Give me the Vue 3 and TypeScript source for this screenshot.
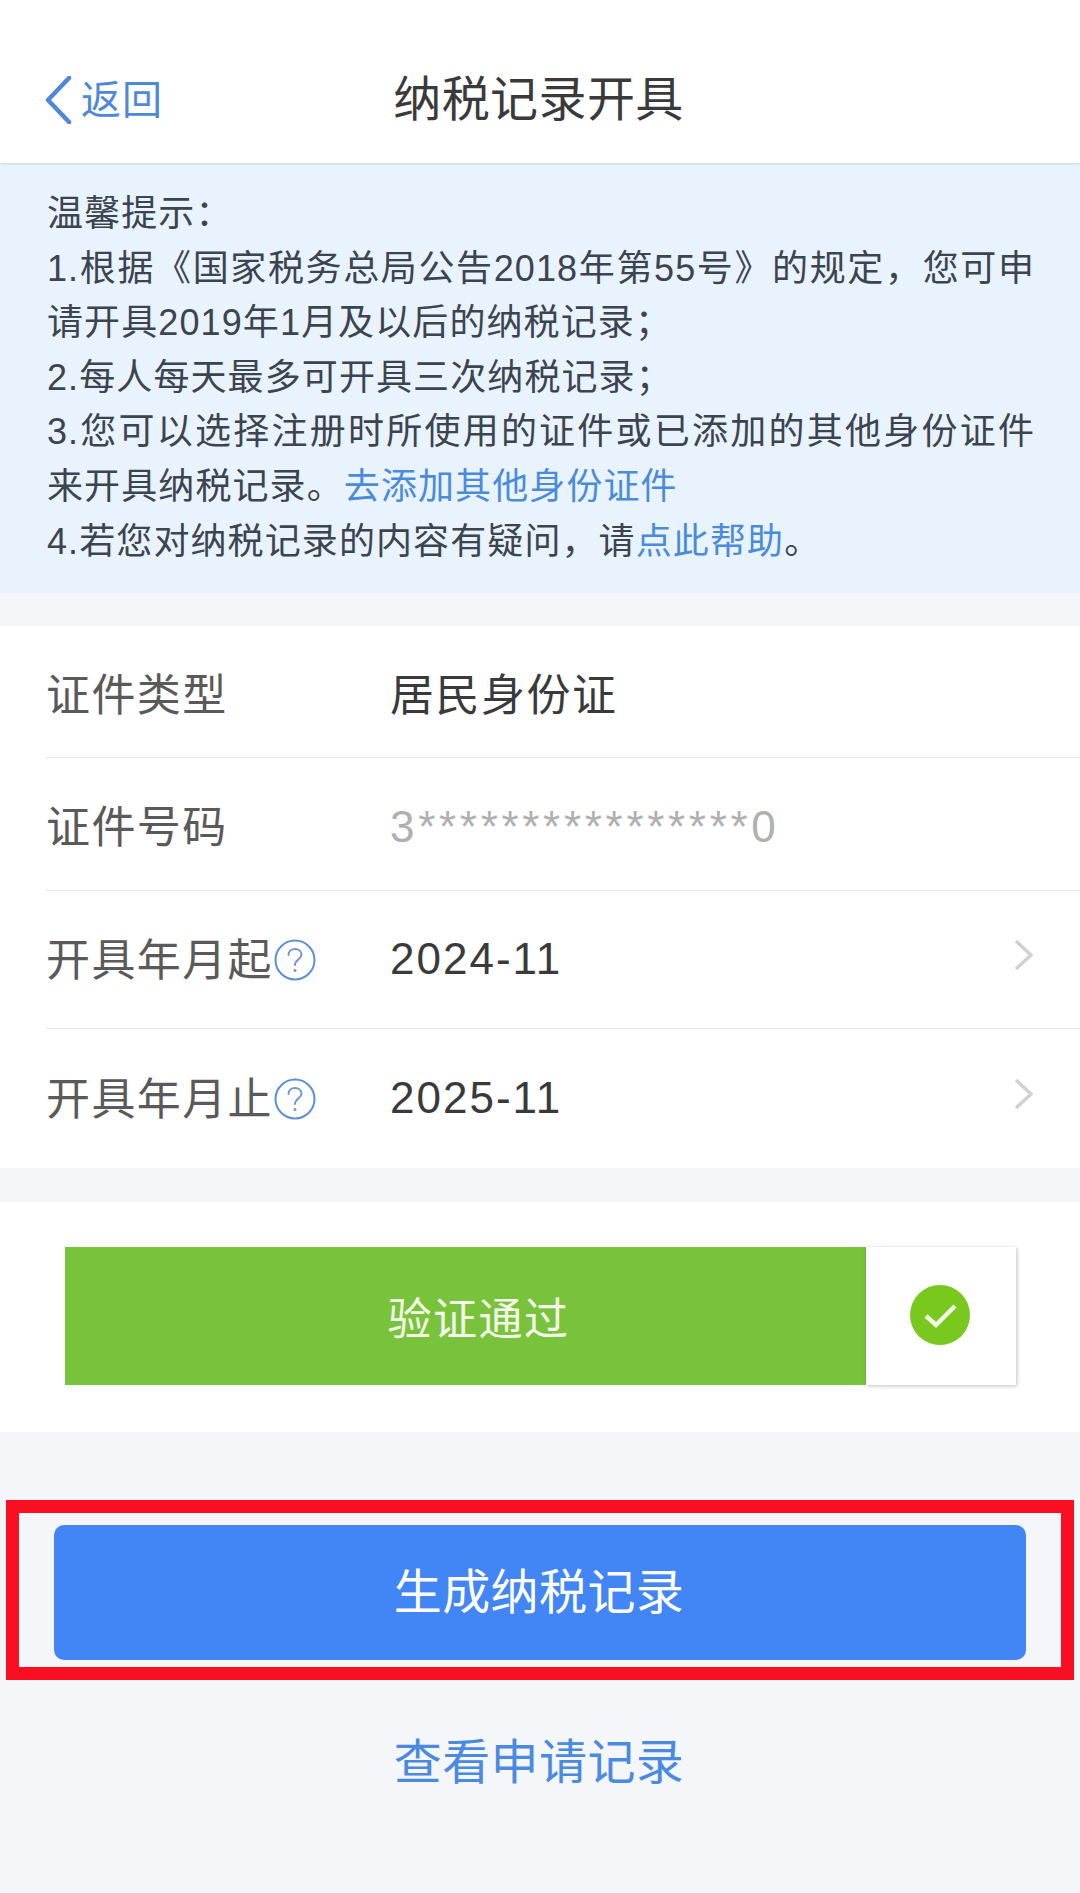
<script setup lang="ts">
interface Row {
  label: string
  value: string
  muted?: boolean
  help?: boolean
  arrow?: boolean
  height: number
}

const rows: Row[] = [
  { label: '证件类型', value: '居民身份证', height: 132 },
  { label: '证件号码', value: '3****************0', muted: true, height: 133 },
  { label: '开具年月起', value: '2024-11', help: true, arrow: true, height: 138 },
  { label: '开具年月止', value: '2025-11', help: true, arrow: true, height: 139 },
]
</script>

<template>
  <div class="page">
    <header class="nav">
      <a class="back">
        <svg class="back-icon" width="30" height="48" viewBox="0 0 30 48">
          <path d="M26 2 L5 24 L26 46" fill="none" stroke="#4f88d9" stroke-width="4.5" stroke-linecap="round" stroke-linejoin="round" />
        </svg>
        <span>返回</span>
      </a>
      <h1 class="title">纳税记录开具</h1>
    </header>

    <section class="notice">
      <p>温馨提示：</p>
      <p>1.根据《国家税务总局公告2018年第55号》的规定，您可申请开具2019年1月及以后的纳税记录；</p>
      <p>2.每人每天最多可开具三次纳税记录；</p>
      <p>3.您可以选择注册时所使用的证件或已添加的其他身份证件来开具纳税记录。<a class="link">去添加其他身份证件</a></p>
      <p>4.若您对纳税记录的内容有疑问，请<a class="link">点此帮助</a>。</p>
    </section>

    <section class="form">
      <div v-for="row in rows" :key="row.label" class="row" :class="{ picker: row.arrow }" :style="{ height: row.height + 'px' }">
        <div class="label">
          <span>{{ row.label }}</span>
          <svg v-if="row.help" class="help" width="42" height="42" viewBox="0 0 42 42">
            <circle cx="21" cy="21" r="19.5" fill="none" stroke="#5b8fd6" stroke-width="2" />
            <path d="M14.5 16 C14.5 12 17.5 10 21 10 C24.8 10 27.5 12.4 27.5 15.8 C27.5 20 21 20.6 21 26" fill="none" stroke="#6f97cf" stroke-width="2" stroke-linecap="round" />
            <circle cx="21" cy="31.5" r="1.5" fill="#6f97cf" />
          </svg>
        </div>
        <div class="value" :class="{ muted: row.muted }">{{ row.value }}</div>
        <svg v-if="row.arrow" class="arrow" width="20" height="32" viewBox="0 0 20 32">
          <path d="M2 2 L17 16 L2 30" fill="none" stroke="#d2d2d2" stroke-width="3.5" />
        </svg>
      </div>
    </section>

    <section class="verify">
      <div class="slider">
        <div class="slider-fill">验证通过</div>
        <div class="slider-handle">
          <svg width="62" height="62" viewBox="0 0 62 62">
            <circle cx="31" cy="31" r="30" fill="#78c81e" />
            <path d="M17 32 L27 41 L46 22" fill="none" stroke="#f2fbe6" stroke-width="4.5" />
          </svg>
        </div>
      </div>
    </section>

    <section class="actions">
      <div class="primary-wrap">
        <button class="primary" type="button">生成纳税记录</button>
        <div class="annotation"></div>
      </div>
      <a class="history">查看申请记录</a>
    </section>
  </div>
</template>

<style scoped>
.page {
  width: 1080px;
  height: 1893px;
  overflow: hidden;
  background: #f4f6fa;
  font-family: "Liberation Sans", "Noto Sans CJK SC", sans-serif;
  color: #333;
}
.nav {
  position: relative;
  z-index: 1;
  height: 163px;
  background: #fff;
  box-shadow: 0 1px 3px rgba(0, 0, 0, 0.12);
  display: flex;
  align-items: center;
  justify-content: center;
  padding-top: 36px;
  box-sizing: border-box;
}
.back {
  position: absolute;
  left: 43px;
  top: 76px;
  display: flex;
  align-items: center;
  gap: 8px;
  font-size: 40px;
  line-height: 48px;
  letter-spacing: 1px;
  color: #4f88d9;
}
.title {
  margin: 0 3px 0 0;
  font-size: 48px;
  line-height: 56px;
  font-weight: 400;
  letter-spacing: 0.4px;
  color: #3a3a3a;
}
.notice {
  height: 430px;
  box-sizing: border-box;
  padding: 24px 45px 0 47px;
  background: #e9f3fd;
  font-size: 36px;
  letter-spacing: 1.1px;
  line-height: 54.6px;
  text-align: justify;
  color: #3c4450;
}
.notice p {
  margin: 0;
}
.link {
  color: #4a8bdc;
}
.form {
  margin-top: 33px;
  background: #fff;
}
.row {
  position: relative;
  display: flex;
  align-items: center;
  margin-left: 46px;
  border-bottom: 1px solid #e6e6e6;
  box-sizing: border-box;
}
.row:last-child {
  border-bottom: 0;
}
.label {
  width: 344px;
  display: flex;
  align-items: center;
  font-size: 44px;
  letter-spacing: 1.4px;
  color: #5a5a5a;
}
.help {
  margin-left: 1px;
}
.value {
  flex: 1;
  font-size: 44px;
  letter-spacing: 1.5px;
  color: #3a3a3a;
}
.value.muted {
  color: #b0b0b0;
  letter-spacing: 3.7px;
  padding-top: 5px;
}
.picker .label span {
  padding-bottom: 5px;
}
.picker .value {
  letter-spacing: 2px;
  padding-bottom: 2px;
}
.arrow {
  margin-right: 46px;
  margin-bottom: 10px;
}
.verify {
  margin-top: 34px;
  height: 230px;
  background: #fff;
  padding: 45px 64px 0 65px;
  box-sizing: border-box;
}
.slider {
  display: flex;
  height: 138px;
}
.slider-fill {
  flex: 1;
  background: #78c23c;
  color: #f4fbe9;
  font-size: 44px;
  letter-spacing: 1.5px;
  padding-left: 26px;
  display: flex;
  align-items: center;
  justify-content: center;
}
.slider-handle {
  width: 150px;
  padding: 0 2px 2px 0;
  box-sizing: border-box;
  background: #fff;
  box-shadow: 1px 1px 4px rgba(0, 0, 0, 0.25);
  display: flex;
  align-items: center;
  justify-content: center;
}
.actions {
  padding: 93px 54px 0;
  text-align: center;
}
.primary-wrap {
  position: relative;
}
.primary {
  display: block;
  width: 100%;
  height: 135px;
  border: 0;
  border-radius: 10px;
  padding: 0 2px 9px 0;
  background: #4285f4;
  color: #fff;
  font-family: inherit;
  font-size: 48px;
  letter-spacing: 0.4px;
}
.annotation {
  position: absolute;
  left: -48px;
  right: -48px;
  top: -25px;
  bottom: -20px;
  border: 13px solid #f90e22;
  pointer-events: none;
}
.history {
  display: block;
  margin-top: 75px;
  padding-right: 2px;
  font-size: 48px;
  line-height: 56px;
  letter-spacing: 0.4px;
  color: #4a8ae0;
}
</style>
